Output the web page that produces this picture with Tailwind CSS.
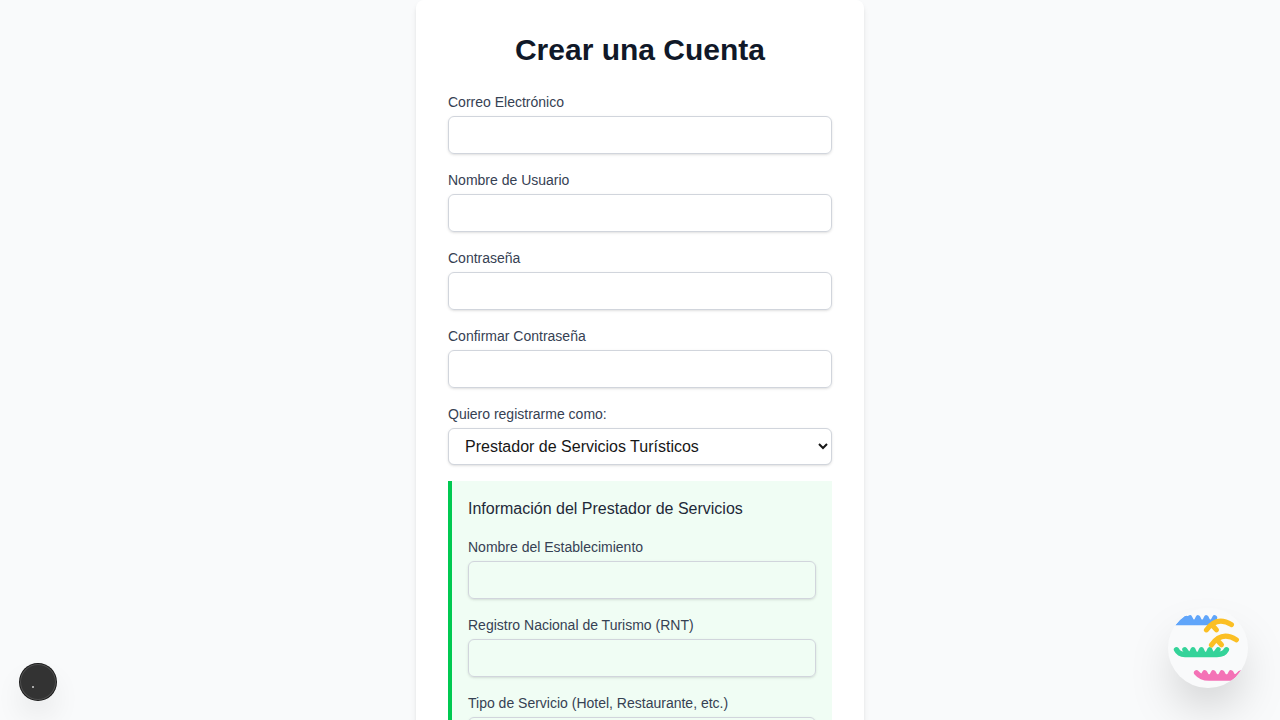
<!DOCTYPE html>
<html lang="es">
<head>
<meta charset="utf-8">
<title>Crear una Cuenta</title>
<script src="https://cdn.jsdelivr.net/npm/@tailwindcss/browser@4"></script>
</head>
<body class="h-screen overflow-hidden bg-gray-50 font-['Liberation_Sans',Arial,sans-serif] text-[#171717]">
<main class="flex h-screen justify-center overflow-hidden">
  <form class="h-[1100px] w-full max-w-md shrink-0 rounded-lg bg-white p-8 shadow-md">
    <h1 class="mb-6 text-center text-3xl font-bold text-gray-900">Crear una Cuenta</h1>
    <div class="space-y-4">
      <div>
        <label for="email" class="block text-sm text-gray-700">Correo Electrónico</label>
        <input id="email" type="email" class="mt-1 block h-[38px] w-full rounded-md border border-gray-300 px-3 py-2 text-sm shadow-sm">
      </div>
      <div>
        <label for="user" class="block text-sm text-gray-700">Nombre de Usuario</label>
        <input id="user" type="text" class="mt-1 block h-[38px] w-full rounded-md border border-gray-300 px-3 py-2 text-sm shadow-sm">
      </div>
      <div>
        <label for="pass" class="block text-sm text-gray-700">Contraseña</label>
        <input id="pass" type="password" class="mt-1 block h-[38px] w-full rounded-md border border-gray-300 px-3 py-2 text-sm shadow-sm">
      </div>
      <div>
        <label for="pass2" class="block text-sm text-gray-700">Confirmar Contraseña</label>
        <input id="pass2" type="password" class="mt-1 block h-[38px] w-full rounded-md border border-gray-300 px-3 py-2 text-sm shadow-sm">
      </div>
      <div>
        <label for="role" class="block text-sm text-gray-700">Quiero registrarme como:</label>
        <select id="role" class="mt-1 block h-[37px] w-full rounded-md border border-gray-300 bg-white px-3 py-2 text-base shadow-sm">
          <option>Prestador de Servicios Turísticos</option>
        </select>
      </div>
      <section class="space-y-4 border-l-4 border-green-500 bg-green-50 p-4">
        <h2 class="text-base text-gray-800">Información del Prestador de Servicios</h2>
        <div>
          <label for="place" class="block text-sm text-gray-700">Nombre del Establecimiento</label>
          <input id="place" type="text" class="mt-1 block h-[38px] w-full rounded-md border border-gray-300 px-3 py-2 text-sm shadow-sm">
        </div>
        <div>
          <label for="rnt" class="block text-sm text-gray-700">Registro Nacional de Turismo (RNT)</label>
          <input id="rnt" type="text" class="mt-1 block h-[38px] w-full rounded-md border border-gray-300 px-3 py-2 text-sm shadow-sm">
        </div>
        <div>
          <label for="kind" class="block text-sm text-gray-700">Tipo de Servicio (Hotel, Restaurante, etc.)</label>
          <input id="kind" type="text" class="mt-1 block h-[38px] w-full rounded-md border border-gray-300 px-3 py-2 text-sm shadow-sm">
        </div>
      </section>
    </div>
  </form>
</main>

<button type="button" aria-label="Herramientas" class="fixed bottom-5 left-5 size-9 rounded-full bg-[#333333] shadow-[0_0_0_1px_#171717,inset_0_0_0_1px_rgba(255,255,255,0.14),0_16px_32px_-8px_rgba(0,0,0,0.24)]">
  <span class="absolute left-3 top-[22px] size-[2px] bg-[#a8a8a8]"></span>
</button>

<button type="button" aria-label="Asistente" class="fixed bottom-8 right-8 size-20 overflow-hidden rounded-full bg-gray-50 shadow-2xl">
  <svg class="size-20" viewBox="8 8 80 80" fill="none" stroke-linecap="round" stroke-linejoin="round" stroke-width="5">
    <g stroke="#60a5fa">
      <path d="M15.3 25.2 Q20 19.3 25 16 H29 L32 19.5 H56 L54 25.2Z" fill="#60a5fa" stroke="none"/>
      <path d="M26.5 18.5 L30 22 M29.8 17.7 L32 22 M36 22 L38 17.7 L40 22 M44.3 22 L46.3 17.7 L48.3 22 M52.4 22 L54.7 17.7"/>
    </g>
    <g stroke="#34d399">
      <path d="M16.5 49.7 Q18.7 54.4 25 54.5 H57 Q64 54.4 66.4 49.7" stroke-width="5.4"/>
      <path d="M24.7 49.6 L28 54 M31 54 L33 49.6 L35 54 M39.4 54 L41.4 49.6 L43.4 54 M47.8 54 L49.8 49.6 L51.8 54 M58.2 49.6 L55 54"/>
    </g>
    <g stroke="#fbbf24">
      <path d="M46.4 29.9 Q57 15.5 71.5 24.7 M52.5 25.5 L56.5 29.9"/>
      <path d="M51.4 45 Q61.5 30.5 76.5 39.8 M57.5 40.5 L61.5 44.8"/>
    </g>
    <g stroke="#f472b6">
      <path d="M36.5 72.7 Q41 78 49 78.2 H71" stroke-width="5.2"/>
      <path d="M41 74.3 H76 V78 H45Z" fill="#f472b6" stroke="none"/>
      <path d="M42.6 76.5 L44.8 72.6 L46.8 76.5 M51.4 76.5 L53.4 72.6 L55.4 76.5 M60.1 76.5 L62.1 72.6 L64.1 76.5 M69 76.5 L71 72.6 L73 76.5"/>
      <path d="M71 80.8 Q77 77.5 81.2 70.2 Q78.5 70 76.7 73 L74 75Z" fill="#f472b6" stroke="none"/>
    </g>
  </svg>
</button>
</body>
</html>
